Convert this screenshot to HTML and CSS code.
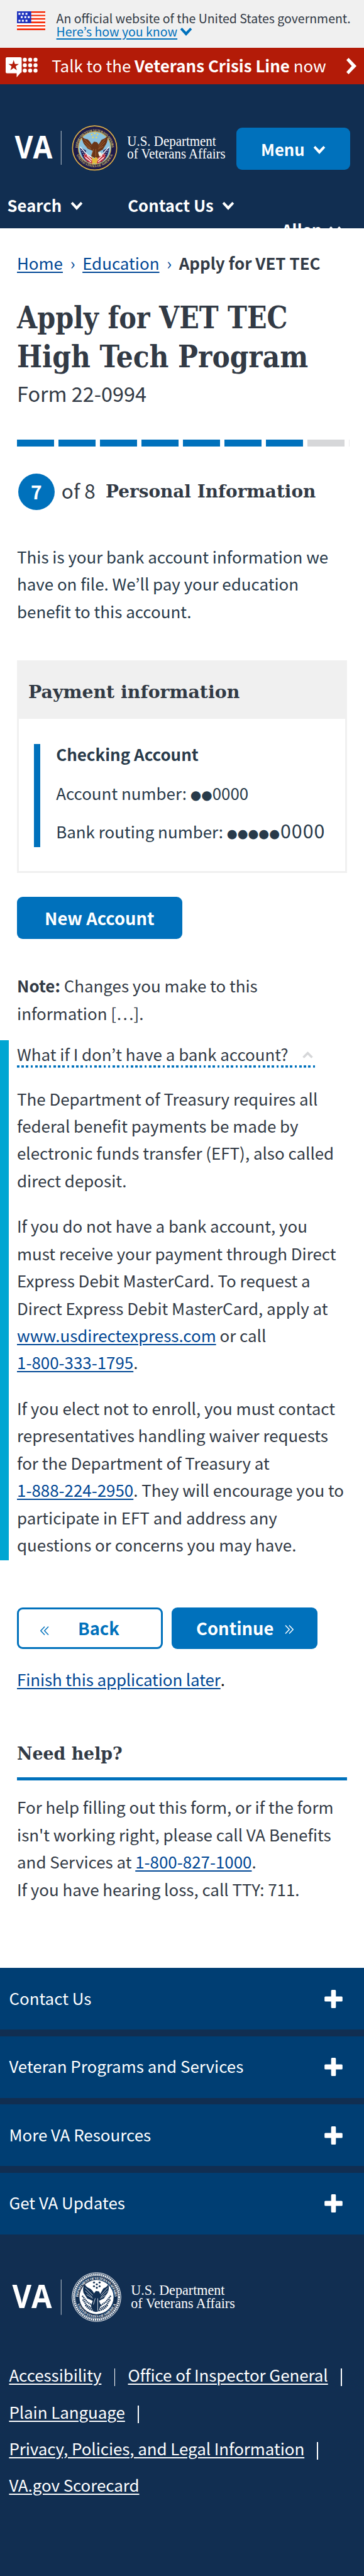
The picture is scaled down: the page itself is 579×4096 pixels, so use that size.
FILE: index.html
```html
<!DOCTYPE html>
<html lang="en">
<head>
<meta charset="utf-8">
<title>Apply for VET TEC</title>
<link rel="stylesheet" href="styles.css">
</head>
<body>
<svg class="defs" width="0" height="0" aria-hidden="true">
  <defs>
    <symbol id="chev" viewBox="0 0 20 14"><path d="M0 3 3 0l7 7.4L17 0l3 3-10 11z" fill="currentColor"/></symbol>
    <symbol id="plus" viewBox="0 0 29 29"><path d="M12.200 0h4.600q1.500 0 1.500 1.500v9h9q1.500 0 1.500 1.500v5q0 1.500-1.500 1.500h-9v9q0 1.500-1.500 1.500h-4.600q-1.500 0-1.500-1.500v-9h-9q-1.500 0-1.500-1.500v-5q0-1.500 1.500-1.500h9v-9q0-1.500 1.500-1.500z" fill="#fff"/></symbol>
    <path id="arcTop" d="M10.500 41A29.500 29.500 0 1 1 69.500 41"/>
    <path id="arcBottom" d="M7.200 45A33.200 33.200 0 0 0 72.800 45"/>
  </defs>
</svg>

<div class="gov">
  <svg class="flag" viewBox="0 0 149 100" preserveAspectRatio="none">
    <path fill="#fff" d="M0 0h149v100H0z"/>
    <path fill="#f52d0a" d="M0 0h149v8H0zM0 18h149v8H0zM0 36h149v8H0zM0 54h149v9H0zM0 73h149v8H0zM0 91h149v9H0z"/>
    <path fill="#1f33be" d="M0 0h75v63H0z"/>
    <path fill="#fff" d="M8 8h10v10H8zM26 8h10v10H26zM45 8h10v10H45zM20 26h10v10H20zM39 26h10v10H39zM57 26h10v10H57zM8 45h10v10H8zM26 45h10v10H26zM45 45h10v10H45z"/>
  </svg>
  <div class="gov-copy">
    <div class="gov-line">An official website of the United States government.</div>
    <div class="gov-link"><a>Here’s how you know</a><svg class="chev"><use href="#chev"/></svg></div>
  </div>
</div>

<div class="crisis">
  <svg class="crisis-icon" viewBox="0 0 52 33">
    <path fill="#fff" d="M2 0h21.500q2 0 2 2v21q0 2-2 2L17.500 32V25.500H2q-2 0-2-2V2Q0 0 2 0z"/>
    <path fill="#b31b08" d="M12.700 4.500l2 6.200h6.300l-5.100 3.800 2 6.300-5.200-3.900-5.200 3.900 2-6.300L4.500 10.700h6.200z"/>
    <g fill="#fff"><circle cx="30.500" cy="4" r="3.200"/><circle cx="39" cy="4" r="3.200"/><circle cx="47.500" cy="4" r="3.200"/><circle cx="30.500" cy="12.700" r="3.200"/><circle cx="39" cy="12.700" r="3.200"/><circle cx="47.500" cy="12.700" r="3.200"/><circle cx="30.500" cy="21.300" r="3.200"/><circle cx="39" cy="21.300" r="3.200"/><circle cx="47.500" cy="21.300" r="3.200"/></g>
  </svg>
  <div class="crisis-text">Talk to the <b>Veterans Crisis Line</b> now</div>
  <svg class="crisis-arrow" viewBox="0 0 16 26"><path fill="#fff" d="M3.500 0 16 13 3.500 26 0 22.500 8.500 13 0 3.500z"/></svg>
</div>

<header class="header">
  <div class="brand-row">
    <svg class="brand" viewBox="0 0 376.300 80">
      <text class="va" x="23.500" y="54.500" font-size="50.600" textLength="60" lengthAdjust="spacingAndGlyphs">VA</text>
      <path d="M97.300 10v54" stroke="#b9c2cd"/>
      <svg x="113.500" y=".3" width="74" height="74" viewBox="0 0 80 80">
        <circle cx="40" cy="40" r="39.500" fill="#1c1a4b"/>
        <circle cx="40" cy="40" r="38" fill="none" stroke="#d9b54a" stroke-width="1.800"/>
        <circle cx="40" cy="40" r="28" fill="#8cc3e0" stroke="#d9b54a" stroke-width="1.200"/>
        <text class="seal-text gold"><textPath href="#arcTop" startOffset="1" textLength="90">DEPARTMENT OF VETERANS AFFAIRS</textPath></text>
        <text class="seal-text gold"><textPath href="#arcBottom" startOffset="7" textLength="80">UNITED STATES OF AMERICA</textPath></text>
        <path fill="#23235c" d="M15 39l10 5 1 13 6 5-3 3Q16 57 15 39zM65 39l-10 5-1 13-6 5 3 3Q64 57 65 39z"/>
        <path fill="#c4303c" d="M23 49l8 5 9 6-5 7-9-5-5-7zM57 49l-8 5-9 6 5 7 9-5 5-7z"/>
        <path stroke="#fff" stroke-width="1.500" fill="none" d="M15 38l12 13 8 5M65 38L53 51l-8 5M24 56l10 8M56 56l-10 8M27 53l8 8M53 53l-8 8"/>
        <path stroke="#fff" stroke-width="1.200" stroke-dasharray="1.200 2.400" fill="none" d="M17 44l7 12M20 44l5 8M63 44l-7 12M60 44l-5 8"/>
        <path fill="#6a3517" d="M18 20q4 5 10 5 5 4 7 9l4-5 5 1 3 4 5-8q6-2 10-6 1 7-2 13l-6 10-8 4 3 8-7 3-8-4 3-9-9-4-7-9q-3-6-3-12z"/>
        <path stroke="#a8693a" stroke-width="1" fill="none" d="M22 25l12 12M22 30l11 10M24 36l10 6M58 25L47 37M58 30L47 40M55 37l-9 5M38 42l-3 10M42 42v12"/>
        <path fill="#f5f1e4" d="M46 48q5-2 6 2l1 3-5 1z"/>
        <path fill="#e3ba3a" d="M35 54l4 5 3-4 4 4-3 9-4-2-3 3z"/>
        <g fill="#ecd65a"><circle cx="35" cy="17" r="1.500"/><circle cx="40" cy="15" r="1.500"/><circle cx="45" cy="17" r="1.500"/><circle cx="37" cy="22" r="1.500"/><circle cx="43" cy="22" r="1.500"/></g>
      </svg>
      <text class="dept" x="202.300" y="33.700" font-size="22.300" textLength="141.300" lengthAdjust="spacingAndGlyphs">U.S. Department</text>
      <text class="dept" x="202.300" y="54" font-size="22.300" textLength="156.300" lengthAdjust="spacingAndGlyphs">of Veterans Affairs</text>
    </svg>
    <div class="menu"><span>Menu</span><svg class="chev"><use href="#chev"/></svg></div>
  </div>
  <div class="nav">
    <div class="nav-item"><span>Search</span><svg class="chev"><use href="#chev"/></svg></div>
    <div class="nav-item contact"><span>Contact Us</span><svg class="chev"><use href="#chev"/></svg></div>
    <div class="nav-item user"><span>Allen</span><svg class="chev"><use href="#chev"/></svg></div>
  </div>
</header>

<main class="main">
  <nav class="crumbs"><a>Home</a><i>›</i><a>Education</a><i>›</i><b>Apply for VET TEC</b></nav>
  <h1 class="slab title"><span class="t1">Apply for VET TEC</span><span class="t2">High Tech Program</span></h1>
  <div class="form-no">Form 22-0994</div>
  <div class="progress"><i></i><i></i><i></i><i></i><i></i><i></i><i></i><i class="off"></i><i class="end"></i></div>
  <div class="step"><span class="num">7</span><span class="of">of 8</span><h2 class="slab step-title"><span>Personal Information</span></h2></div>

  <p class="intro">This is your bank account information we<br>have on file. We’ll pay your education<br>benefit to this account.</p>

  <section class="card">
    <div class="card-head slab"><span>Payment information</span></div>
    <div class="card-body">
      <div class="acct">
        <b>Checking Account</b>
        <div>Account number: <span class="dots">●●</span>0000</div>
        <div>Bank routing number: <span class="dots five">●●●●●</span><span class="big">0000</span></div>
      </div>
    </div>
  </section>

  <div class="btn new">New Account</div>
  <p class="note"><b>Note:</b> Changes you make to this<br>information […].</p>

  <section class="info">
    <div class="question"><span>What if I don’t have a bank account?</span><svg class="up" viewBox="0 0 17 11"><path d="M1.500 9.500l7-7 7 7" fill="none" stroke="#d6d7d9" stroke-width="3.600"/></svg></div>
    <p>The Department of Treasury requires all<br>federal benefit payments be made by<br>electronic funds transfer (EFT), also called<br>direct deposit.</p>
    <p>If you do not have a bank account, you<br>must receive your payment through Direct<br>Express Debit MasterCard. To request a<br>Direct Express Debit MasterCard, apply at<br><a>www.usdirectexpress.com</a> or call<br><a>1-800-333-1795</a>.</p>
    <p>If you elect not to enroll, you must contact<br>representatives handling waiver requests<br>for the Department of Treasury at<br><a>1-888-224-2950</a>. They will encourage you to<br>participate in EFT and address any<br>questions or concerns you may have.</p>
  </section>

  <div class="actions">
    <div class="btn back"><svg class="dbl" viewBox="0 0 14 14"><path d="M7 .5L.8 7 7 13.500M13 .5L6.800 7l6.200 6.500" fill="none" stroke="currentColor" stroke-width="1.500"/></svg><span>Back</span></div>
    <div class="btn next"><span>Continue</span><svg class="dbl" viewBox="0 0 14 14"><path d="M1 .5L7.200 7 1 13.500M7 .5L13.200 7 7 13.500" fill="none" stroke="currentColor" stroke-width="1.500"/></svg></div>
  </div>
  <div class="finish"><a>Finish this application later</a>.</div>

  <h3 class="slab help"><span>Need help?</span></h3>
  <p class="help-text">For help filling out this form, or if the form<br>isn't working right, please call VA Benefits<br>and Services at <a>1-800-827-1000</a>.<br>If you have hearing loss, call TTY: 711.</p>
</main>

<footer class="footer">
  <div class="acc"><span>Contact Us</span><svg><use href="#plus"/></svg></div>
  <div class="acc"><span>Veteran Programs and Services</span><svg><use href="#plus"/></svg></div>
  <div class="acc"><span>More VA Resources</span><svg><use href="#plus"/></svg></div>
  <div class="acc"><span>Get VA Updates</span><svg><use href="#plus"/></svg></div>
  <svg class="brand foot" viewBox="0 0 376.300 80">
    <text class="va" x="19.500" y="57.400" font-size="52.600" textLength="63" lengthAdjust="spacingAndGlyphs">VA</text>
    <path d="M97.300 11.600v56.200" stroke="#b9c2cd"/>
    <svg x="114" y="0" width="79" height="79" viewBox="0 0 80 80">
      <circle cx="40" cy="40" r="39.300" fill="none" stroke="#fff" stroke-width="1"/>
      <circle cx="40" cy="40" r="36.500" fill="none" stroke="#fff" stroke-width="2.800" stroke-dasharray="2.200 1"/>
      <circle cx="40" cy="40" r="34.600" fill="none" stroke="#fff" stroke-width=".7"/>
      <text class="seal-text white"><textPath href="#arcTop" startOffset="1" textLength="90">DEPARTMENT OF VETERANS AFFAIRS</textPath></text>
      <text class="seal-text white"><textPath href="#arcBottom" startOffset="7" textLength="80">UNITED STATES OF AMERICA</textPath></text>
      <circle cx="40" cy="40" r="27.500" fill="#fff"/>
      <path fill="#112e51" d="M21 19q3 6 8 7 5 3 7 8l3-4 5 1 2 4 5-9q6-2 8-7 2 8-1 14l-6 9-8 4 3 7-4 10-4 1-4-1-4-9 3-8-9-4-6-9q-2-8 2-14z"/>
      <path stroke="#fff" stroke-width=".8" fill="none" d="M22 25l12 12M22 30l11 10M24 36l10 6M58 25L47 37M58 30L47 40M55 37l-9 5M38 42l-3 10M42 42v20M46 47l3 11"/>
      <path stroke="#112e51" stroke-width="2.400" fill="none" stroke-dasharray="2 1" d="M17 38l8 10 9 6M63 38l-8 10-9 6M18 44l6 9 10 6M62 44l-6 9-10 6M22 53l6 6 8 3M58 53l-6 6-8 3"/>
      <g fill="#112e51"><circle cx="36" cy="16.500" r="1.600"/><circle cx="40.500" cy="19.500" r="1.600"/><circle cx="45" cy="16.500" r="1.600"/><circle cx="36" cy="22.500" r="1.600"/><circle cx="45" cy="22.500" r="1.600"/><circle cx="40.500" cy="25" r="1.600"/></g>
    </svg>
    <text class="dept" x="208.300" y="35.800" font-size="23.300" textLength="149.200" lengthAdjust="spacingAndGlyphs">U.S. Department</text>
    <text class="dept" x="208.300" y="57.400" font-size="23.300" textLength="165.400" lengthAdjust="spacingAndGlyphs">of Veterans Affairs</text>
  </svg>
  <div class="links">
    <div><a>Accessibility</a><i></i><a>Office of Inspector General</a><i></i></div>
    <div><a>Plain Language</a><i></i></div>
    <div><a>Privacy, Policies, and Legal Information</a><i></i></div>
    <div><a>VA.gov Scorecard</a></div>
  </div>
</footer>
</body>
</html>
```
FILE: styles.css
```css
* { box-sizing: border-box; }
body {
  margin: 0;
  width: 579px;
  height: 4096px;
  overflow: hidden;
  background: #fff;
  color: #323a45;
  font: 25.930px/43.440px "Noto Sans CJK KR", "Open Sans", sans-serif;
  white-space: nowrap;
}
p, h1, h2, h3 { margin: 0; font-size: inherit; }
i { font-style: normal; }
svg { display: block; flex: none; }
.defs { position: absolute; }
a {
  color: #004795;
  text-decoration: underline;
  text-decoration-thickness: 1.800px;
  text-underline-offset: 2.800px;
}
.slab { font-family: "DejaVu Serif", serif; font-weight: bold; }
.slab span { display: block; width: max-content; transform-origin: 0 50%; }
.chev { width: 20px; height: 13px; }

/* Government banner */
.gov { height: 76px; background: #f0f0f0; display: flex; padding: 18px 0 0 26.600px; }
.flag { width: 45px; height: 30px; margin-right: 18px; }
.gov-copy { margin-top: -.4px; font-size: 19.500px; line-height: 21px; }
.gov-link { display: flex; align-items: center; color: #0071bc; }
.gov-link a { color: inherit; }
.gov-link .chev { margin: 2px 0 0 4px; }

/* Crisis line */
.crisis { height: 58px; background: #b31b08; color: #fff; display: flex; }
.crisis-icon { width: 52px; height: 33px; margin: 14.500px 0 0 9px; }
.crisis-text { margin: 8px 0 0 21.200px; width: 468.800px; line-height: 40px; font-size: 25.900px; }
.crisis-arrow { width: 16px; height: 26px; margin-top: 16px; }

/* Header */
.header { height: 229px; background: #112e51; color: #fff; overflow: hidden; font-weight: bold; }
.brand-row { display: flex; padding-top: 64px; height: 168px; }
.brand { width: 376.300px; height: 80px; }
.va { font-family: "Open Sans", sans-serif; font-weight: bold; fill: #fff; }
.dept { font-family: "Liberation Serif", serif; font-weight: normal; fill: #fff; }
.seal-text { font: bold 5.600px "Liberation Serif", serif; }
.gold { fill: #d9c06a; }
.white { fill: #fff; }
.menu { width: 181px; height: 67.600px; margin-top: 4.700px; border-radius: 9px; background: #0071bc; display: flex; align-items: center; padding-left: 38.700px; font-size: 25.700px; }
.menu .chev { margin: 4px 0 0 13.500px; }
.nav { display: flex; font-size: 25.700px; }
.nav-item { display: flex; align-items: center; height: 40px; padding-left: 11.600px; margin-top: 4px; }
.nav-item .chev { margin: 3px 0 0 13.500px; }
.nav-item.contact { padding-left: 71.500px; }
.nav-item.user { margin-top: 43px; padding-left: 75px; }
.nav-item.user .chev { margin-left: 11px; }

/* Main */
.main { padding: 32.700px 27px 0; height: 2766.400px; }
.crumbs { display: flex; height: 43.440px; color: #004795; }
.crumbs i { width: 31.200px; text-align: center; }
.crumbs b { color: #323a45; }
.title { font-family: "DejaVu Serif Condensed", "DejaVu Serif", serif; font-size: 47.600px; line-height: 61.500px; margin-top: 36.200px; }
.t1 { transform: scaleX(.968); }
.t2 { transform: scaleX(.991); }
.form-no { font-size: 32.400px; line-height: 48px; margin-top: 2.300px; }
.progress { display: flex; gap: 7px; height: 11px; margin-top: 50.100px; }
.progress i { width: 59px; flex: none; background: #0071bc; }
.progress .off { background: #d6d7d9; }
.progress .end { width: 1px; background: #ebebec; }
.step { display: flex; align-items: center; height: 58px; margin: 43.300px 0 0 1.800px; }
.num { width: 58px; height: 58px; border-radius: 50%; background: #0071bc; color: #fff; text-align: center; font-weight: bold; font-size: 30px; line-height: 56px; }
.of { margin: 0 0 4px 11px; width: 70.200px; font-size: 31.500px; }
.step-title { font-size: 28.500px; }
.step-title span { transform: scaleX(.979); }
.intro { margin-top: 51.800px; color: #283a4a; }

.card { margin-top: 56.700px; width: 525px; height: 338.200px; border: 3.500px solid #f0f0f0; }
.card-head { height: 90.300px; background: #f0f0f0; padding: 26.300px 0 0 15.300px; font-size: 28.500px; line-height: 43px; }
.card-head span { transform: scaleX(.995); }
.card-body { padding: 40.300px 0 0 24px; }
.acct { display: flex; flex-direction: column; border-left: 10.700px solid #0071bc; height: 164.100px; padding-left: 25.200px; line-height: 61.500px; color: #283a4a; }
.acct b { margin-top: -15px; }
.dots { font: 20px/0 "DejaVu Sans", sans-serif; vertical-align: 1px; }
.five { font-size: 19.300px; }
.big { font-size: 30.400px; line-height: 0; letter-spacing: 1px; margin-left: 1px; }

.btn { height: 66.900px; border-radius: 9px; background: #0071bc; color: #fff; font-weight: bold; font-size: 27.400px; display: flex; align-items: center; justify-content: center; }
.new { width: 262.600px; margin-top: 38.200px; height: 66.500px; }
.note { margin-top: 52.700px; }
.info { position: relative; margin-top: 22.200px; }
.info::before { content: ""; position: absolute; left: -27px; top: 0; width: 14.400px; height: 826.700px; background: #00a6d2; }
.question { display: flex; width: 475px; height: 43.200px; background: repeating-linear-gradient(90deg, #0071bc 0 3.620px, transparent 3.620px 7.240px) 0 100% / 100% 3.600px no-repeat; }
.question span { width: 454px; margin-top: -.5px; }
.up { width: 17px; height: 11px; margin-top: 17.500px; }
.info p + p { margin-top: 28.960px; }
.question + p { margin-top: 26.900px; }

.actions { display: flex; gap: 14.300px; margin-top: 78.200px; }
.dbl { width: 14px; height: 14px; }
.back { width: 232px; border: 3.600px solid #0071bc; background: #fff; color: #0071bc; justify-content: flex-start; padding-left: 33.500px; }
.back .dbl { margin-top: 7px; }
.back span { margin-left: 46.500px; }
.next { width: 231.500px; justify-content: flex-start; padding-left: 38.700px; }
.next .dbl { margin: 4px 0 0 18px; }
.finish { margin-top: 25.200px; color: #111; }
.finish a { letter-spacing: -.1px; }
.help { font-size: 28.500px; line-height: 43px; margin-top: 75.400px; border-bottom: 5px solid #0071bc; width: 525px; height: 64.100px; }
.help span { transform: scaleX(.94); }
.help-text { margin-top: 20.600px; }

/* Footer */
.footer { background: #112e51; height: 967px; color: #fff; }
.acc { height: 97.900px; margin-bottom: 10.600px; background: #003e73; display: flex; align-items: center; justify-content: space-between; padding: 0 34.300px 0 14.400px; }
.acc span { margin-bottom: 4px; }
.acc svg { width: 29px; height: 29px; }
.footer .acc:nth-child(4) { margin-bottom: 0; box-shadow: none; }
.foot { margin-top: 60px; }
.links { padding: 54.700px 0 0 14.400px; line-height: 58.100px; }
.links div { display: flex; align-items: center; }
.links a { color: #fff; letter-spacing: -.050px; }
.links i { width: 1.800px; height: 28px; background: #fff; margin: 8px 20.200px 0; }
```
